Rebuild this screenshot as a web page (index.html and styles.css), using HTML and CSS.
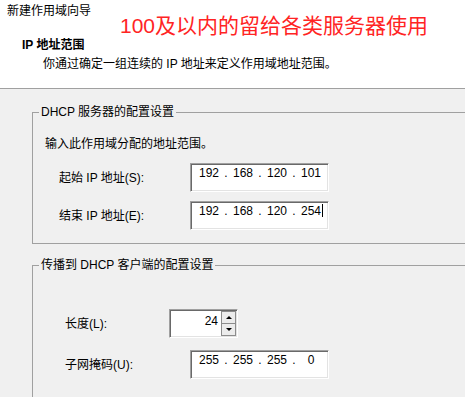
FILE: index.html
```html
<!DOCTYPE html>
<html lang="zh-CN">
<head>
    <meta charset="UTF-8">
    <meta name="viewport" content="width=device-width, initial-scale=1.0">
    <title>新建作用域向导</title>
    <link rel="stylesheet" href="styles.css">
</head>
<body>
    <div class="header">
        <div class="title">新建作用域向导</div>
        <div class="note">100及以内的留给各类服务器使用</div>
        <div class="heading">IP 地址范围</div>
        <div class="desc">你通过确定一组连续的 IP 地址来定义作用域地址范围。</div>
    </div>

    <fieldset class="group group-server">
        <legend>DHCP 服务器的配置设置</legend>
        <div class="intro">输入此作用域分配的地址范围。</div>

        <div class="row">
            <label class="label">起始 IP 地址(S):</label>
            <div class="ipbox">
                <span class="octet">192</span><span class="dot">.</span>
                <span class="octet">168</span><span class="dot">.</span>
                <span class="octet">120</span><span class="dot">.</span>
                <span class="octet">101</span>
            </div>
        </div>

        <div class="row row-gap">
            <label class="label">结束 IP 地址(E):</label>
            <div class="ipbox">
                <span class="octet">192</span><span class="dot">.</span>
                <span class="octet">168</span><span class="dot">.</span>
                <span class="octet">120</span><span class="dot">.</span>
                <span class="octet">254<span class="caret"></span></span>
            </div>
        </div>
    </fieldset>

    <fieldset class="group group-client">
        <legend>传播到 DHCP 客户端的配置设置</legend>

        <div class="row">
            <label class="label label-len">长度(L):</label>
            <div class="spin">
                <div class="spin-value">24</div>
                <div class="spin-buttons">
                    <span class="spin-btn up"></span>
                    <span class="spin-btn down"></span>
                </div>
            </div>
        </div>

        <div class="row row-mask">
            <label class="label label-mask">子网掩码(U):</label>
            <div class="ipbox">
                <span class="octet">255</span><span class="dot">.</span>
                <span class="octet">255</span><span class="dot">.</span>
                <span class="octet">255</span><span class="dot">.</span>
                <span class="octet">0</span>
            </div>
        </div>
    </fieldset>
</body>
</html>
```

FILE: styles.css
```css
* {
    box-sizing: border-box;
}
html, body {
    margin: 0;
    height: 397px;
    overflow: hidden;
}
body {
    background: #f0f0f0;
    font-family: "Liberation Sans", "Noto Sans CJK SC", sans-serif;
    font-size: 12px;
    line-height: 16px;
    color: #000;
}
.header {
    position: relative;
    height: 89px;
    background: #fff;
    border-bottom: 1px solid #a0a0a0;
    padding: 3px 0 0 7px;
}
.heading {
    margin: 18px 0 0 15px;
    font-weight: bold;
}
.desc {
    margin: 3px 0 0 36px;
}
.note {
    position: absolute;
    left: 120px;
    top: 14px;
    font-size: 21px;
    line-height: 24px;
    color: #ff2424;
    white-space: nowrap;
}
.group {
    margin: 0 0 0 32px;
    min-width: 0;
    border: 1px solid #a0a0a0;
    border-right: none;
    padding: 0 0 0 6px;
}
.group legend {
    margin: 0;
    padding: 0 2px;
    line-height: 16px;
}
.group-server {
    margin-top: 15px;
    padding-top: 16px;
    padding-bottom: 13px;
}
.group-client {
    margin-top: 13px;
    padding-top: 36px;
    padding-bottom: 18px;
    border-bottom: none;
}
.intro {
    margin-left: 6px;
    margin-bottom: 11px;
}
.row {
    display: flex;
    align-items: center;
}
.row-gap {
    margin-top: 9px;
}
.row-mask {
    margin-top: 12px;
}
.label {
    width: 131px;
    margin-left: 20px;
    white-space: nowrap;
}
.label-len,
.label-mask {
    margin-left: 26px;
}
.label-len {
    width: 104px;
}
.label-mask {
    width: 125px;
}
.ipbox,
.spin {
    height: 29px;
    background: #fff;
    border: 1px solid;
    border-color: #a0a0a0 #fff #fff #a0a0a0;
    box-shadow: inset 1px 1px 0 #696969, inset -1px -1px 0 #e3e3e3;
    display: flex;
}
.ipbox {
    width: 139px;
    padding: 1px 0 0 5px;
    align-items: flex-start;
}
.octet {
    width: 26px;
    text-align: center;
    white-space: nowrap;
}
.dot {
    width: 8px;
    text-align: center;
}
.caret {
    display: inline-block;
    width: 1px;
    height: 13px;
    margin-left: 1px;
    margin-right: -2px;
    background: #000;
    vertical-align: -2px;
}
.spin {
    width: 69px;
}
.spin-value {
    flex: 1;
    text-align: right;
    padding: 3px 3px 0 0;
}
.spin-buttons {
    width: 15px;
    margin: 1px 1px 1px 0;
    display: grid;
    grid-template-rows: 1fr 1fr;
}
.spin-btn {
    background: #ececec;
    border: 1px solid #8c8c8c;
    display: flex;
    align-items: center;
    justify-content: center;
}
.spin-btn + .spin-btn {
    border-top: none;
}
.spin-btn::before {
    content: "";
    border-left: 3px solid transparent;
    border-right: 3px solid transparent;
}
.up::before {
    border-bottom: 3px solid #000;
}
.down::before {
    border-top: 3px solid #000;
}
```
